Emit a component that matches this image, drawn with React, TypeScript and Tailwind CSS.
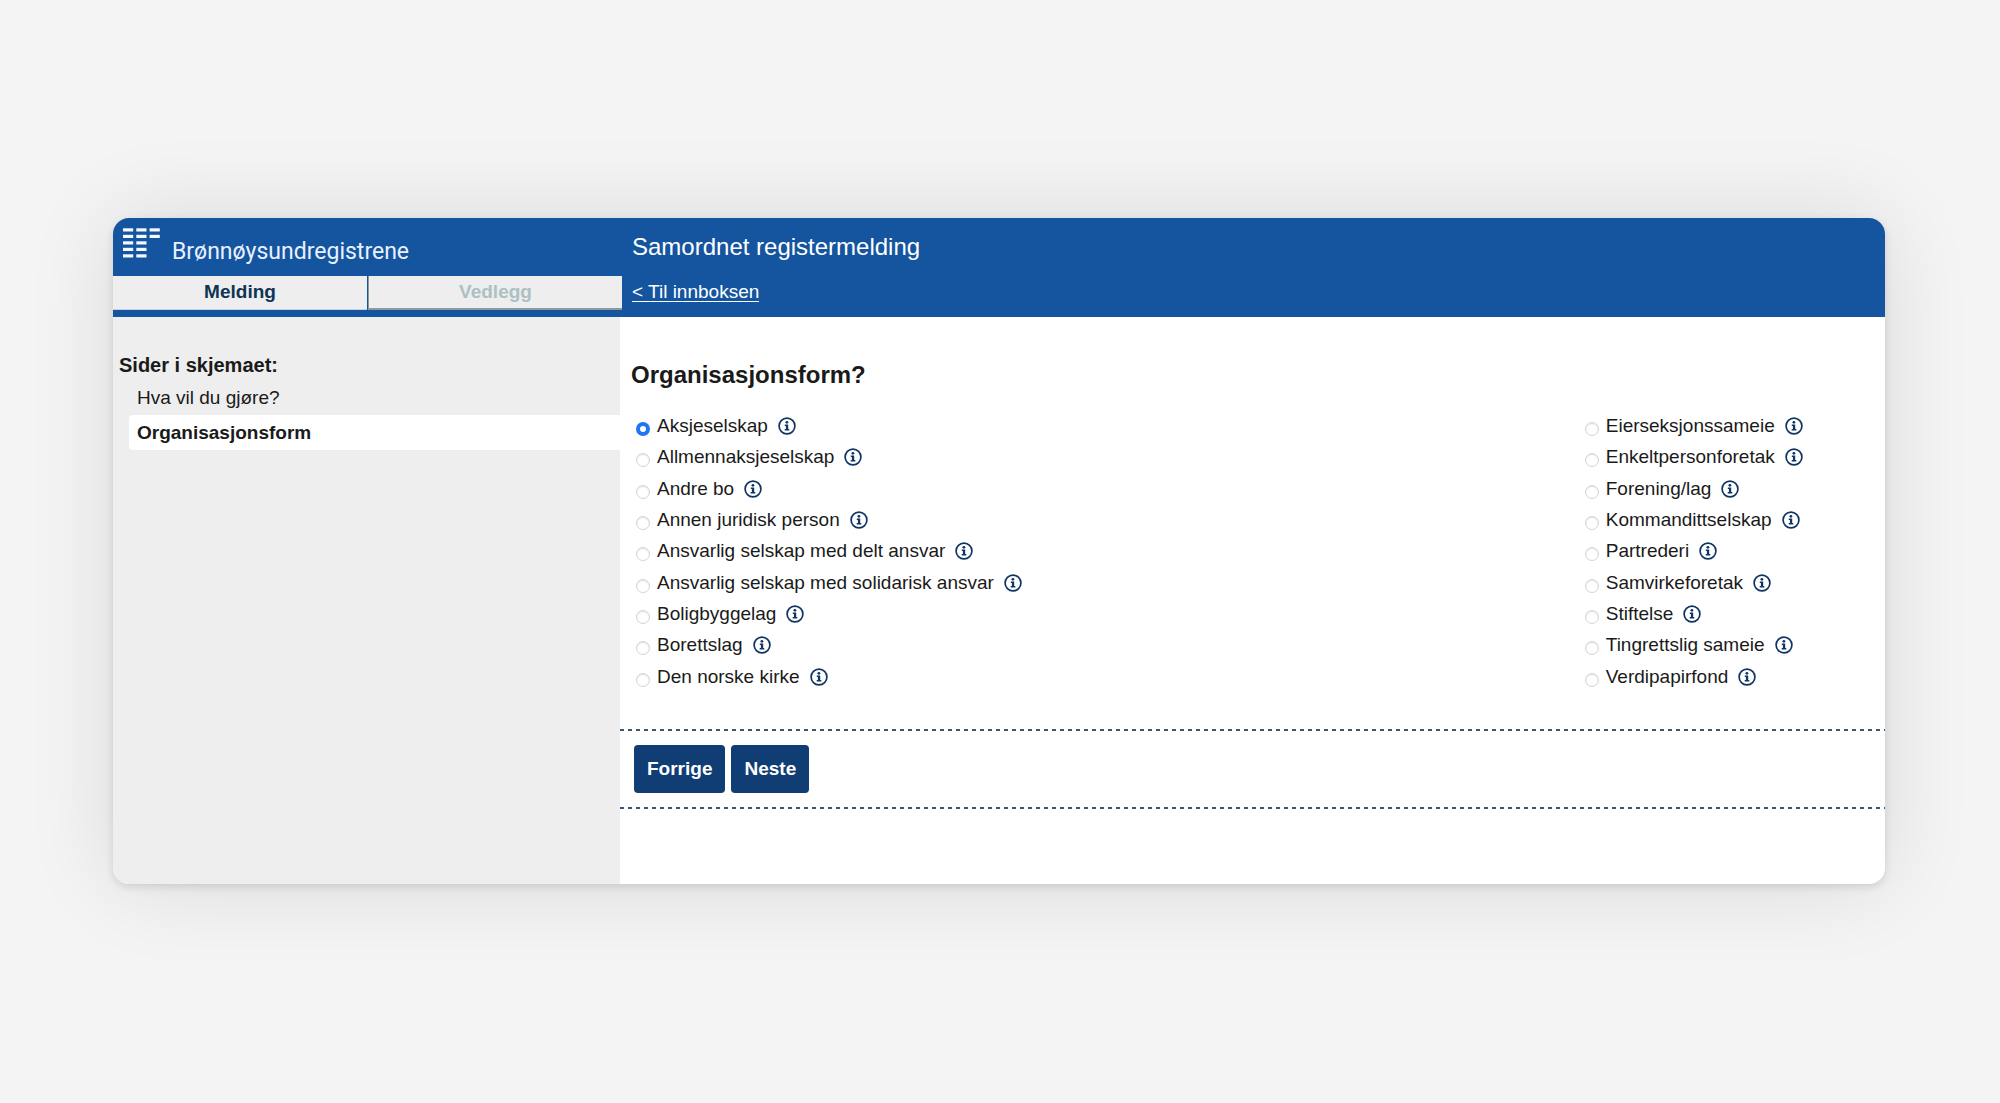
import { useState } from "react";

const PAGES = ["Hva vil du gjøre?", "Organisasjonsform"];

const COLUMNS = [
  [
    "Aksjeselskap",
    "Allmennaksjeselskap",
    "Andre bo",
    "Annen juridisk person",
    "Ansvarlig selskap med delt ansvar",
    "Ansvarlig selskap med solidarisk ansvar",
    "Boligbyggelag",
    "Borettslag",
    "Den norske kirke",
  ],
  [
    "Eierseksjonssameie",
    "Enkeltpersonforetak",
    "Forening/lag",
    "Kommandittselskap",
    "Partrederi",
    "Samvirkeforetak",
    "Stiftelse",
    "Tingrettslig sameie",
    "Verdipapirfond",
  ],
];

function InfoIcon() {
  return (
    <svg viewBox="0 0 18 18" className="h-[18px] w-[18px]" fill="none" aria-hidden="true">
      <circle cx="9" cy="9" r="7.9" stroke="#0f3563" strokeWidth="1.7" />
      <circle cx="8.9" cy="5.3" r="1.4" fill="#0f3563" />
      <path d="M6.8 7.4h3.4v4.6h1.1v1.5H6.7V12h1.2V8.9H6.8z" fill="#0f3563" />
    </svg>
  );
}

function LogoMark() {
  const rows = [3, 3, 2, 2, 2];
  return (
    <svg viewBox="0 0 37 30" className="h-[30px] w-[37px]" fill="#f4f8ff" aria-hidden="true">
      {rows.map((count, y) =>
        Array.from({ length: count }, (_, x) => (
          <rect key={`${x}-${y}`} x={x * 13.3} y={y * 6.5 + 0.3} width="10.2" height="3.2" />
        )),
      )}
    </svg>
  );
}

function DashedLine() {
  return <div className="h-[2px] bg-[repeating-linear-gradient(90deg,#3a5670_0_4px,#ffffff_4px_8px)]" />;
}

export default function App() {
  const [selected, setSelected] = useState("Aksjeselskap");

  return (
    <div className="flex min-h-screen items-center justify-center bg-[#f4f4f4] pr-[115px] pb-[2px] pl-[113px] font-['Liberation_Sans',Arial,sans-serif] text-[19px] leading-6 text-[#1a1a1a]">
      <div className="w-full overflow-hidden rounded-2xl bg-white shadow-[0_3px_8px_rgba(0,0,0,0.12),0_0_90px_rgba(0,0,0,0.11)]">
        <header className="flex h-[99px] bg-[#15559f]">
          <div className="flex w-[509px] shrink-0 flex-col">
            <div className="flex h-[58px] gap-3 pt-[10px] pl-[10px]">
              <LogoMark />
              <span className="pt-[10px] font-[Roboto,sans-serif] text-[23px] leading-7 text-[#e8f1ff]">
                Brønnøysundregistrene
              </span>
            </div>
            <nav className="grid h-[34px] grid-cols-2 gap-px font-bold">
              <button className="border-b border-[#c5d3e3] bg-[#eeeeee] text-[#0f3556]">Melding</button>
              <button
                className="border-b-2 border-l border-[#8d9a9a] bg-[#eeeeee] text-[#adc0c3]"
                disabled
              >
                Vedlegg
              </button>
            </nav>
          </div>
          <div className="flex flex-col items-start pt-[13px] pl-[10px] text-white">
            <h1 className="text-[24px] leading-8">Samordnet registermelding</h1>
            <a href="#innboks" className="mt-5 border-b border-white leading-[18px]">
              &lt; Til innboksen
            </a>
          </div>
        </header>

        <div className="flex">
          <aside className="w-[507px] shrink-0 bg-[#eeeeee] pt-9">
            <h2 className="pl-[6px] text-[20px] font-bold">Sider i skjemaet:</h2>
            <ul className="mt-1 pl-4">
              {PAGES.map((page) => (
                <li key={page}>
                  <a
                    href="#side"
                    className={
                      page === "Organisasjonsform"
                        ? "block rounded-l-sm bg-white px-2 py-[5px] leading-[25px] font-bold"
                        : "block px-2 py-1 leading-[26px]"
                    }
                  >
                    {page}
                  </a>
                </li>
              ))}
            </ul>
          </aside>

          <main className="min-w-0 flex-1 pb-[75px]">
            <fieldset>
              <legend className="pt-[42px] pl-[11px] text-[24px] leading-8 font-bold">Organisasjonsform?</legend>
              <div className="mt-5 grid grid-cols-[3fr_1fr]">
                {COLUMNS.map((options, i) => (
                  <ul key={i} className="grid h-[282px] grid-rows-9 pl-4">
                    {options.map((option) => (
                      <li key={option} className="flex items-center gap-[10px]">
                        <label className="flex items-center gap-[7px]">
                          <input
                            type="radio"
                            name="organisasjonsform"
                            checked={option === selected}
                            onChange={() => setSelected(option)}
                            className="mt-[6px] h-[14px] w-[14px] appearance-none rounded-full border border-[#d4d4d4] bg-white shadow-[inset_0_1px_1px_rgba(0,0,0,0.12)] checked:border-[4px] checked:border-[#1f75f5] checked:shadow-none"
                          />
                          {option}
                        </label>
                        <button aria-label={`Hjelp: ${option}`}>
                          <InfoIcon />
                        </button>
                      </li>
                    ))}
                  </ul>
                ))}
              </div>
            </fieldset>

            <div className="mt-9">
              <DashedLine />
              <div className="flex gap-[6px] py-[14px] pl-[14px] font-bold text-white">
                <button className="h-12 rounded bg-[#103d73] px-[13px]">Forrige</button>
                <button className="h-12 rounded bg-[#103d73] px-[13px]">Neste</button>
              </div>
              <DashedLine />
            </div>
          </main>
        </div>
      </div>
    </div>
  );
}
